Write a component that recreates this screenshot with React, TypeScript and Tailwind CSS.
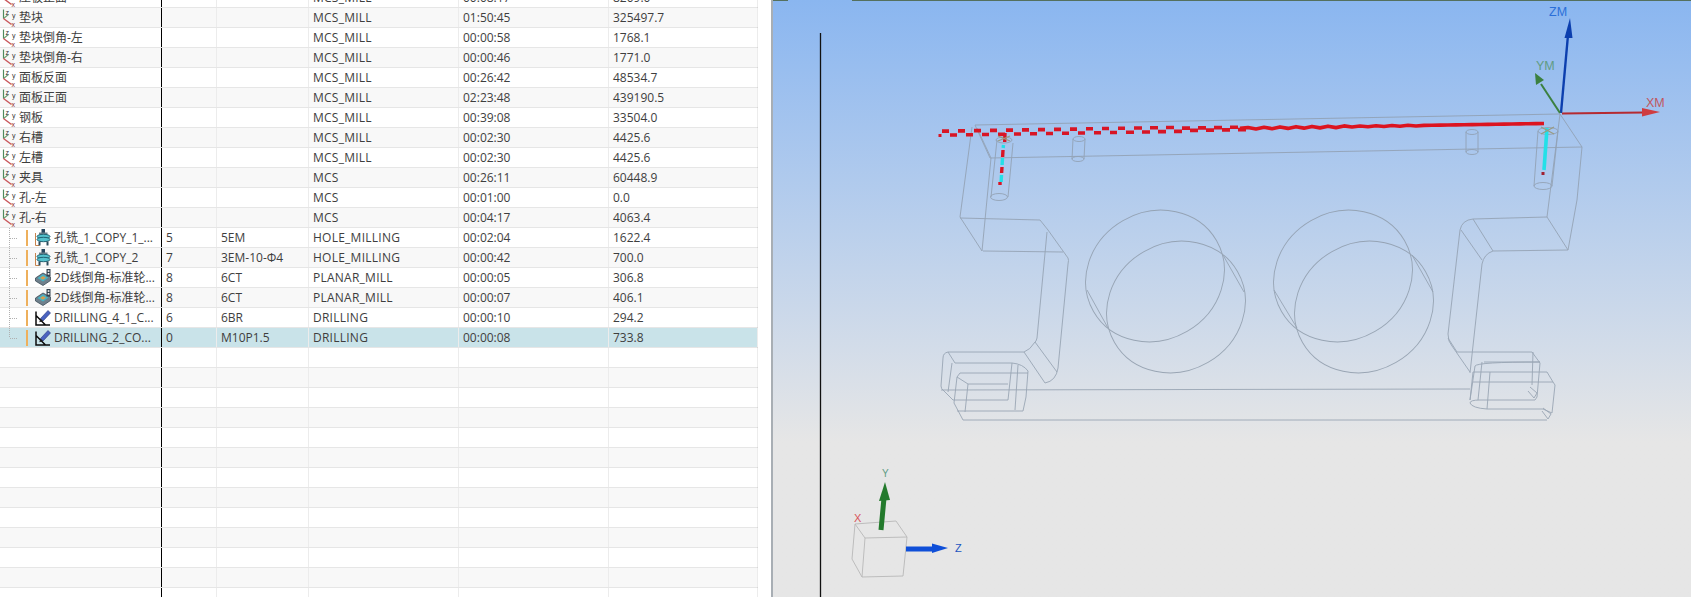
const fontStack = '"Open Sans", "Noto Sans CJK SC", sans-serif';

interface Row {
  name: string;
  tool?: string;
  toolName?: string;
  type?: string;
  time?: string;
  length?: string;
  icon?: "mcs" | "hole" | "planar" | "drill";
  selected?: boolean;
}

const rows: Row[] = [
  { name: "压板正面", type: "MCS_MILL", time: "00:08:17", length: "8209.0", icon: "mcs" },
  { name: "垫块", type: "MCS_MILL", time: "01:50:45", length: "325497.7", icon: "mcs" },
  { name: "垫块倒角-左", type: "MCS_MILL", time: "00:00:58", length: "1768.1", icon: "mcs" },
  { name: "垫块倒角-右", type: "MCS_MILL", time: "00:00:46", length: "1771.0", icon: "mcs" },
  { name: "面板反面", type: "MCS_MILL", time: "00:26:42", length: "48534.7", icon: "mcs" },
  { name: "面板正面", type: "MCS_MILL", time: "02:23:48", length: "439190.5", icon: "mcs" },
  { name: "钢板", type: "MCS_MILL", time: "00:39:08", length: "33504.0", icon: "mcs" },
  { name: "右槽", type: "MCS_MILL", time: "00:02:30", length: "4425.6", icon: "mcs" },
  { name: "左槽", type: "MCS_MILL", time: "00:02:30", length: "4425.6", icon: "mcs" },
  { name: "夹具", type: "MCS", time: "00:26:11", length: "60448.9", icon: "mcs" },
  { name: "孔-左", type: "MCS", time: "00:01:00", length: "0.0", icon: "mcs" },
  { name: "孔-右", type: "MCS", time: "00:04:17", length: "4063.4", icon: "mcs" },
  { name: "孔铣_1_COPY_1_...", tool: "5", toolName: "5EM", type: "HOLE_MILLING", time: "00:02:04", length: "1622.4", icon: "hole" },
  { name: "孔铣_1_COPY_2", tool: "7", toolName: "3EM-10-Φ4", type: "HOLE_MILLING", time: "00:00:42", length: "700.0", icon: "hole" },
  { name: "2D线倒角-标准轮...", tool: "8", toolName: "6CT", type: "PLANAR_MILL", time: "00:00:05", length: "306.8", icon: "planar" },
  { name: "2D线倒角-标准轮...", tool: "8", toolName: "6CT", type: "PLANAR_MILL", time: "00:00:07", length: "406.1", icon: "planar" },
  { name: "DRILLING_4_1_C...", tool: "6", toolName: "6BR", type: "DRILLING", time: "00:00:10", length: "294.2", icon: "drill" },
  { name: "DRILLING_2_CO...", tool: "0", toolName: "M10P1.5", type: "DRILLING", time: "00:00:08", length: "733.8", icon: "drill", selected: true },
  ...Array.from({ length: 13 }, () => ({ name: "" })),
];

const McsIcon = () => (
  <svg width="16" height="18" viewBox="0 0 16 18" className="shrink-0">
    <path d="M2.5 0.5v9" stroke="#4f8a5c" strokeWidth="1.2" />
    <path d="M2.5 9.5l5-4" stroke="#6f9f70" strokeWidth="1.1" />
    <path d="M2.5 9.5l8 6" stroke="#c8555a" strokeWidth="1.4" />
    <text x="4.5" y="6" fontSize="7" fill="#333" fontFamily="Liberation Sans, sans-serif">z</text>
    <text x="11" y="9" fontSize="7" fill="#333" fontFamily="Liberation Sans, sans-serif">y</text>
    <text x="10.5" y="17.5" fontSize="7" fill="#8a2a2a" fontFamily="Liberation Sans, sans-serif">x</text>
  </svg>
);

const HoleIcon = () => (
  <svg width="16" height="17" viewBox="0 0 16 17" className="shrink-0">
    <path d="M0.5 4v12.5h4" stroke="#c8854e" strokeWidth="1" fill="none" />
    <rect x="6.5" y="0" width="3.5" height="5" fill="#26465e" />
    <rect x="4" y="3.5" width="8.5" height="2" fill="#6d7e8a" />
    <ellipse cx="8.5" cy="7.5" rx="6.5" ry="2.2" fill="#55c0cc" stroke="#1f6272" />
    <ellipse cx="8.5" cy="10.5" rx="6.5" ry="2.2" fill="#55c0cc" stroke="#1f6272" />
    <path d="M4.5 12.5v4M12.5 12.5v4" stroke="#2c4c5c" strokeWidth="2" />
  </svg>
);

const PlanarIcon = () => (
  <svg width="16" height="17" viewBox="0 0 16 17" className="shrink-0">
    <path d="M0.5 9l7.5-5 7.5 4v3.5L8 16.5 0.5 12z" fill="#6f808c" stroke="#3c4c58" strokeWidth="0.8" />
    <path d="M2.5 9l5.5-3.7 5.5 3.2L8 12.4z" fill="#45b4c6" />
    <path d="M5 9l3-2 3 1.8-3 2z" fill="#d69c50" />
    <rect x="11.5" y="0" width="4" height="7.5" fill="#33424f" />
    <rect x="12.7" y="1.2" width="1.7" height="1.7" fill="#eee" />
    <rect x="12.7" y="4" width="1.7" height="1.7" fill="#eee" />
  </svg>
);

const DrillIcon = () => (
  <svg width="16" height="17" viewBox="0 0 16 17" className="shrink-0">
    <path d="M1 2.5v13.5h14M1 6.5L10.5 16" stroke="#0c0c0c" strokeWidth="1.5" fill="none" />
    <path d="M5.5 9.5L13 1.5l2.5 2.5L8 12z" fill="#4a63c0" stroke="#25347c" strokeWidth="0.6" />
    <path d="M5.5 9.5l-1.2 3.7L8 12z" fill="#1c1c1c" />
  </svg>
);

const icons = { mcs: McsIcon, hole: HoleIcon, planar: PlanarIcon, drill: DrillIcon };

// dotted tree guide on the child rows, the last one stops at the middle
const TreeGuide = ({ last }: { last: boolean }) => (
  <svg width="20" height="20" viewBox="0 0 20 20" className="shrink-0">
    <path d={last ? "M9.5 0v10" : "M9.5 0v20"} stroke="#b0b0b0" strokeDasharray="1 1" />
    <path d="M10 10.5h8" stroke="#b0b0b0" strokeDasharray="1 1" />
  </svg>
);

const Cell = ({ text, className }: { text?: string; className: string }) => (
  <div className={`flex items-center overflow-hidden whitespace-nowrap border-r pl-[4px] ${className}`}>{text}</div>
);

const TableRow = ({ row, striped, last }: { row: Row; striped: boolean; last: boolean }) => {
  const Icon = row.icon ? icons[row.icon] : null;
  const isChild = row.tool !== undefined;
  const bg = row.selected ? "bg-[#c9e3e9]" : striped ? "bg-[#f8f8f8]" : "bg-white";
  return (
    <div className={`flex h-5 shrink-0 border-b border-[#e6e6e6] ${bg}`}>
      <div className="flex w-[162px] shrink-0 items-center overflow-hidden whitespace-nowrap border-r border-black">
        {isChild ? (
          <>
            <TreeGuide last={last} />
            <span className="ml-[6px] mr-[7px] h-[16px] w-[2px] shrink-0 bg-[#eeb05c]" />
            {Icon && <Icon />}
            <span className="ml-[3px]">{row.name}</span>
          </>
        ) : (
          <>
            {Icon && (
              <span className="ml-[1px] mr-[2px] flex">
                <Icon />
              </span>
            )}
            <span>{row.name}</span>
          </>
        )}
      </div>
      <Cell text={row.tool} className="w-[55px] shrink-0 border-[#ececec]" />
      <Cell text={row.toolName} className="w-[92px] shrink-0 border-[#ececec]" />
      <Cell text={row.type} className="w-[150px] shrink-0 border-[#ececec] tracking-[0.25px]" />
      <Cell text={row.time} className="w-[150px] shrink-0 border-[#ececec]" />
      <Cell text={row.length} className="w-[149px] shrink-0 border-[#ececec]" />
    </div>
  );
};

// the toolpath is stepped at the left and smooths out to the right
const pathY = (x: number) => 129 - (x - 1200) * 0.016;
const stairs: string[] = [];
for (let x = 942, i = 0; x < 1240; x += 8, i++) {
  const amp = x < 1180 ? 2 : 1.2;
  const y = pathY(x) + (i % 2 === 0 ? -amp : amp);
  stairs.push(`M${x} ${y}h${x < 1120 ? 7 : 8}`);
}
let wave = "M1240 128.4";
for (let x = 1248; x <= 1548; x += 8) {
  const amp = x < 1350 ? 0.8 : x < 1420 ? 0.4 : 0;
  wave += `L${x} ${pathY(x) + (Math.floor(x / 8) % 2 === 0 ? -amp : amp)}`;
}

const edges = [
  // body
  "M975 125L1560 114L1582 147L990 158L975 125",
  "M972 127L960 217L982 251L991 158",
  "M977 128L991 158",
  "M960 218L1040 220L1048 230L1068 258Q1069 260 1068 264M983 251L1063 252",
  "M1047 232L1037 338Q1036 342 1035 342M1068 264L1058 368Q1056 381 1045 383M1035 342L1057 372M1035 342Q1030 350 1024 352L1045 383",
  "M1582 147L1577 200L1568 250L1493 251Q1484 254 1482 264L1470 373",
  "M1560 114L1547 217L1473 219Q1462 220 1460 230L1448 334Q1448 342 1452 346L1470 372",
  "M1547 217L1568 250M1473 219L1493 251M1461 230L1482 260",
  // left foot
  "M1024 352L948 352Q943 353 943 358L941 386Q941 389 944 391L953 400L1008 400",
  "M948 352L955 363L1012 363Q1023 364 1028 371L1026 397L1023 411L957 411",
  "M952 363L948 392M960 373L1028 373M960 373L957 377L968 384L1008 384M957 377L954 403L963 420L1547 420",
  "M968 384L965 412M1012 363L1008 400M1018 365L1015 410",
  "M941 390L1470 389",
  // right foot
  "M1457 352L1532 352L1540 363L1537 397L1535 400L1480 400Q1470 400 1470 403Q1472 408 1487 409L1543 409L1552 413L1555 385L1553 382L1547 372L1473 372L1470 400",
  "M1484 362L1540 362Q1477 362 1475 366L1470 400M1482 362L1478 400M1490 372L1487 409M1473 382L1553 382M1533 352L1532 385M1448 338L1457 352",
  "M1530 387L1537 393L1534 398L1528 391M1543 408L1551 414L1548 419L1542 411",
  // tangents on the round openings
  "M1087 290L1108 328M1223 255L1244 292M1274 290L1297 328M1412 255L1433 292",
  // holes
  "M997 140L991 197M1013 143L1008 197M1073 139L1072 159M1085 139L1084 159M1466 132L1466 152M1478 132L1478 152M1538 131L1534 186M1558 131L1552 186",
];

const ModelView = () => (
  <svg viewBox="773 0 918 597" className="h-full w-full" fontFamily="Liberation Sans, sans-serif">
    <path d="M773 0.5h15M852 0.5h839" stroke="#54705e" strokeWidth="1.2" />
    <path d="M820.5 33V597" stroke="#111" strokeWidth="1.3" />

    <g fill="none" stroke="#8f9cab" strokeWidth="0.9" opacity="0.85">
      {edges.map((d, i) => (
        <path key={i} d={d} />
      ))}
      <ellipse cx="1155" cy="276" rx="71" ry="64" transform="rotate(-30 1155 276)" />
      <ellipse cx="1176" cy="307" rx="71" ry="64" transform="rotate(-30 1176 307)" />
      <ellipse cx="1343" cy="276" rx="71" ry="64" transform="rotate(-30 1343 276)" />
      <ellipse cx="1364" cy="307" rx="71" ry="64" transform="rotate(-30 1364 307)" />
      <ellipse cx="1004" cy="140" rx="8" ry="3" />
      <ellipse cx="999" cy="197" rx="8.5" ry="3.5" />
      <ellipse cx="1079" cy="139" rx="6" ry="2.5" />
      <ellipse cx="1078" cy="159" rx="6" ry="2.5" />
      <ellipse cx="1472" cy="132" rx="6" ry="2.5" />
      <ellipse cx="1472" cy="152" rx="6" ry="2.5" />
      <ellipse cx="1548" cy="131" rx="10" ry="3.5" />
      <ellipse cx="1543" cy="186" rx="9" ry="3.5" />
    </g>

    <path d={stairs.join("")} stroke="#d81525" strokeWidth="3.6" fill="none" />
    <path d="M940 134v3" stroke="#d81525" strokeWidth="3" />
    <path d={wave} stroke="#dc1420" strokeWidth="3.6" fill="none" strokeLinejoin="round" />

    <path d="M1005 133l-.3 9M1003 150l-.4 7M1002 167l-.4 6M1000 182v3" stroke="#d81525" strokeWidth="3.4" />
    <path d="M1003.5 145l-.3 3M1002.5 158l-.4 7M1001.5 175l-.4 7" stroke="#22e0e8" strokeWidth="3.4" />
    <path d="M1547 128l-3 42" stroke="#22e0e8" strokeWidth="3.6" />
    <path d="M1543 172v3" stroke="#a02030" strokeWidth="3" />
    <path d="M998 136l12 5M1010 136l-12 5M1541 127l13 7M1554 127l-13 7" stroke="#9a9a80" strokeWidth="1.2" />

    {/* work coordinate system */}
    <path d="M1561 113L1568 35" stroke="#0c3fae" strokeWidth="2.4" />
    <path d="M1570 18L1564.5 38H1572.5z" fill="#0c3fae" />
    <path d="M1560 113L1541 84" stroke="#3b8040" strokeWidth="2" />
    <path d="M1535 73L1536 85L1544 80z" fill="#3b8040" />
    <path d="M1562 113.5L1644 112.5" stroke="#b52a30" strokeWidth="2" />
    <path d="M1660 112L1642 108V116.5z" fill="#cf3c40" />
    <text x="1549" y="16" fontSize="12.5" fill="#2a6fd8">ZM</text>
    <text x="1536" y="70" fontSize="12.5" fill="#5f9c84">YM</text>
    <text x="1646" y="107" fontSize="12.5" fill="#c0575f">XM</text>

    {/* view triad */}
    <g fill="none" stroke="#b8b8b8" strokeWidth="0.9">
      <path d="M855 524L896 521L907 537L903 576L862 577L852 559L855 524L865 538L907 537M865 538L862 577" />
    </g>
    <path d="M881 530L884 498" stroke="#237a2c" strokeWidth="5" />
    <path d="M885 482L879 501L890 500z" fill="#237a2c" />
    <path d="M906 549H934" stroke="#0f4fd8" strokeWidth="5" />
    <path d="M948 548L932 543.5V553z" fill="#0f4fd8" />
    <text x="882" y="477" fontSize="10" fill="#5f9c84">Y</text>
    <text x="854" y="522" fontSize="11" fill="#d8555a">X</text>
    <text x="955" y="552" fontSize="11" fill="#2255c0">Z</text>
  </svg>
);

export default function App() {
  return (
    <div className="flex h-[597px] w-[1691px] overflow-hidden bg-white text-[12px] text-[#3e3e3e]" style={{ fontFamily: fontStack }}>
      <div className="flex w-[758px] shrink-0 flex-col border-r border-[#d8d8d8]">
        <div className="-mt-[12px] flex flex-col">
          {rows.map((row, i) => (
            <TableRow key={i} row={row} striped={i % 2 === 1} last={!!row.selected} />
          ))}
        </div>
      </div>
      <div className="ml-[13px] min-w-0 flex-1 border-l-[2px] border-[#a8aeb4] bg-linear-to-b from-[#8ab6f0] to-[#e6e6e6] to-[74%]">
        <ModelView />
      </div>
    </div>
  );
}
